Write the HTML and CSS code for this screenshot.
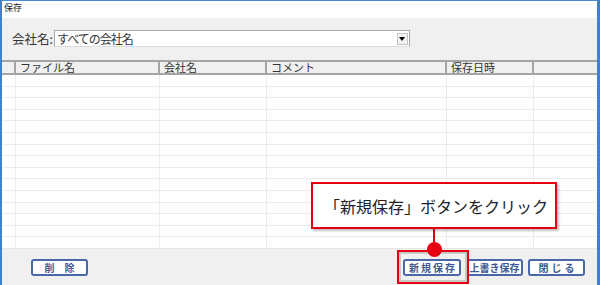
FILE: index.html
```html
<!DOCTYPE html>
<html lang="ja">

<head>
    <meta charset="UTF-8">
    <meta name="viewport" content="width=device-width, initial-scale=1.0">
    <title>保存</title>
    <link rel="stylesheet" href="styles.css">
</head>

<body>
    <div class="window">
        <div class="titlebar">保存</div>

        <div class="content">
            <div class="filter">
                <label for="company">会社名:</label>
                <div class="combo" id="company">
                    <span class="combo-text">すべての会社名</span>
                    <span class="combo-drop">
                        <svg width="6" height="4" viewBox="0 0 6 4"><path d="M0 0h6L3 4z" fill="#000" /></svg>
                    </span>
                </div>
            </div>

            <div class="grid">
                <div class="grid-head">
                    <div class="cell"></div>
                    <div class="cell">ファイル名</div>
                    <div class="cell">会社名</div>
                    <div class="cell">コメント</div>
                    <div class="cell">保存日時</div>
                    <div class="cell last"></div>
                </div>
                <div class="grid-body">
                    <div class="col"></div>
                    <div class="col"></div>
                    <div class="col"></div>
                    <div class="col"></div>
                    <div class="col"></div>
                    <div class="col last"></div>
                </div>
            </div>

            <div class="footer">
                <button class="btn btn-delete">削　除</button>
                <div class="footer-right">
                    <button class="btn btn-new">新規保存</button>
                    <button class="btn">上書き保存</button>
                    <button class="btn btn-close">閉じる</button>
                </div>
            </div>
        </div>

        <!-- 説明用の注記 -->
        <div class="highlight"></div>
        <div class="pointer-line"></div>
        <div class="pointer-dot"></div>
        <div class="callout">「新規保存」ボタンをクリック</div>
    </div>
</body>

</html>
```

FILE: styles.css
```css
html,
body {
    margin: 0;
    padding: 0;
}

body {
    font-family: "Noto Sans CJK JP", "Noto Sans", sans-serif;
    background-color: #ffffff;
    width: 600px;
    height: 285px;
    overflow: hidden;
}

.window {
    position: relative;
    width: 600px;
    height: 285px;
    box-sizing: border-box;
    border-top: 1px solid #4a8ad0;
    border-left: 2px solid #3d82cc;
    border-right: 3px solid #3d82cc;
    display: flex;
    flex-direction: column;
    background-color: #f0f0f0;
}

.titlebar {
    height: 17px;
    background-color: #ffffff;
    font-size: 9px;
    line-height: 13px;
    padding-left: 2px;
    color: #222222;
}

.content {
    flex: 1;
    display: flex;
    flex-direction: column;
}

.filter {
    display: flex;
    align-items: center;
    margin: 12px 0 0 10px;
    height: 17px;
}

.filter label {
    font-size: 12.5px;
    color: #333333;
    margin-right: 1px;
}

.combo {
    width: 356px;
    height: 17px;
    box-sizing: border-box;
    background-color: #ffffff;
    border: 1px solid #a8a8a8;
    border-bottom-color: #dcdcdc;
    display: flex;
    align-items: center;
    justify-content: space-between;
}

.combo-text {
    font-size: 12px;
    color: #333333;
    padding-left: 2px;
    letter-spacing: -1px;
}

.combo-drop {
    width: 11px;
    height: 12px;
    margin-right: 1px;
    box-sizing: border-box;
    border: 1px solid #c4c4c4;
    background-color: #f2f2f2;
    display: flex;
    align-items: center;
    justify-content: center;
}

.grid {
    margin-top: 13px;
    background-color: #ffffff;
    display: flex;
    flex-direction: column;
    height: 188px;
    border-bottom: 1px solid #e6e6e6;
}

.grid-head,
.grid-body {
    display: grid;
    grid-template-columns: 14px 144px 107px 180px 87px 1fr;
}

.grid-head {
    height: 15px;
    box-sizing: border-box;
    background-color: #f0f0f0;
    border-top: 2px solid #a4a4a4;
    border-bottom: 2px solid #a4a4a4;
}

.grid-head .cell {
    font-size: 11px;
    line-height: 11px;
    color: #333333;
    padding-left: 4px;
    border-right: 2px solid #a4a4a4;
    white-space: nowrap;
}

.grid-head .cell.last,
.grid-body .col.last {
    border-right: none;
}

.grid-body {
    flex: 1;
    background-image: repeating-linear-gradient(to bottom, transparent 0, transparent 10.6px, #ececec 10.6px, #ececec 11.6px);
}

.grid-body .col {
    border-right: 1px solid #ececec;
}

.footer {
    display: flex;
    justify-content: space-between;
    align-items: center;
    padding: 10px 12px 0 29px;
}

.footer-right {
    display: flex;
    gap: 5px;
}

.btn {
    height: 17px;
    width: 57px;
    padding: 0;
    box-sizing: border-box;
    border: 2px solid #4a68a8;
    border-radius: 3px;
    background-color: #ffffff;
    color: #3d5a96;
    font-family: "Noto Sans CJK JP", sans-serif;
    font-size: 10px;
    font-weight: bold;
    line-height: 12px;
    white-space: nowrap;
}

.btn-new {
    width: 58px;
    letter-spacing: 2px;
    padding-left: 2px;
}

.btn-close {
    letter-spacing: 3px;
    padding-left: 3px;
}

.highlight {
    position: absolute;
    left: 395px;
    top: 249px;
    width: 72px;
    height: 34px;
    box-sizing: border-box;
    border: 2px solid #e60012;
    box-shadow: inset 0 0 0 2px #c8c8c8;
}

.pointer-line {
    position: absolute;
    left: 431px;
    top: 226px;
    width: 2px;
    height: 18px;
    background-color: #e60012;
}

.pointer-dot {
    position: absolute;
    left: 425px;
    top: 241px;
    width: 15px;
    height: 15px;
    border-radius: 50%;
    background-color: #e60012;
}

.callout {
    position: absolute;
    left: 309px;
    top: 181px;
    width: 246px;
    height: 47px;
    box-sizing: border-box;
    border: 2px solid #e60012;
    background-color: #ffffff;
    box-shadow: 2px 2px 2px rgba(0, 0, 0, 0.25);
    font-size: 16px;
    color: #222222;
    display: flex;
    align-items: center;
    padding-left: 11px;
    white-space: nowrap;
}
```
